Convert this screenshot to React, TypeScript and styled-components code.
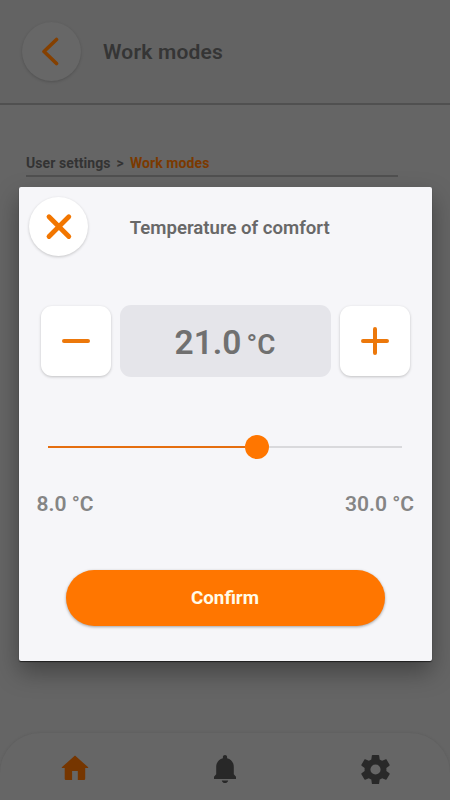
import React from "react";
import styled, { createGlobalStyle } from "styled-components";

const GlobalStyle = createGlobalStyle`
  * { box-sizing: border-box; }
  body { margin: 0; background: #666; font-family: Roboto, "Liberation Sans", sans-serif; }
  button { border: 0; padding: 0; font: inherit; }
`;

const Screen = styled.div`
  position: relative;
  display: flex;
  flex-direction: column;
  width: 450px;
  height: 800px;
  overflow: hidden;
  background: #656565;
`;

const Header = styled.header`
  display: flex;
  align-items: flex-start;
  height: 105px;
  padding: 22px 22px 0;
  border-bottom: 2px solid #505050;
  background: #636363;
`;

const RoundButton = styled.button<{ $dimmed?: boolean }>`
  display: flex;
  align-items: center;
  justify-content: center;
  flex: none;
  width: 59px;
  height: 59px;
  border-radius: 50%;
  background: ${(p) => (p.$dimmed ? "#676767" : "#fff")};
  box-shadow: 0 1px 3px ${(p) => (p.$dimmed ? "rgba(0,0,0,.18)" : "rgba(0,0,0,.2)")};
`;

const PageTitle = styled.h1`
  margin: 17px 0 0 22px;
  color: #353535;
  font-size: 21px;
  line-height: 26px;
  font-weight: 600;
  letter-spacing: 0.22px;
`;

const Content = styled.main`
  flex: 1;
  padding: 48px 52px 0 26px;
`;

const Breadcrumb = styled.nav`
  display: flex;
  gap: 6px;
  height: 24px;
  border-bottom: 2px solid #505050;
  color: #333;
  font-size: 14px;
  line-height: 20px;
  font-weight: 700;
  letter-spacing: 0.08px;
`;

const Current = styled.span`
  color: #7b3900;
`;

const BottomBar = styled.nav`
  display: grid;
  grid-template-columns: repeat(3, 1fr);
  justify-items: center;
  height: 67px;
  padding-top: 21px;
  border-radius: 40px 40px 0 0;
  background: #666;
  box-shadow: 0 0 3px rgba(0, 0, 0, 0.1);
`;

const Overlay = styled.div`
  position: absolute;
  inset: 0;
  padding: 187px 18.500px 0 18.500px;
`;

const Dialog = styled.section`
  display: flex;
  flex-direction: column;
  height: 474px;
  border-radius: 2px;
  background: #f6f6f9;
  box-shadow: 0 1px 1px rgba(0, 0, 0, 0.6), 0 11px 24px rgba(0, 0, 0, 0.34);
`;

const DialogHeader = styled.div`
  display: grid;
  grid-template-columns: 59px 1fr 51px;
  align-items: center;
  height: 59px;
  margin: 10px 9px 0 10.500px;
`;

const DialogTitle = styled.h2`
  margin: 2px 0 0;
  color: #686868;
  text-align: center;
  font-size: 18.600px;
  line-height: 24px;
  font-weight: 600;
  white-space: nowrap;
`;

const Stepper = styled.div`
  display: grid;
  grid-template-columns: 70px 211px 70px;
  align-items: center;
  justify-content: space-between;
  height: 72px;
  margin: 49px 22px 0;
`;

const StepButton = styled.button`
  display: flex;
  align-items: center;
  justify-content: center;
  height: 70px;
  border-radius: 11px;
  background: #fff;
  box-shadow: 0 1px 3px rgba(0, 0, 0, 0.22);
`;

const Reading = styled.output`
  display: flex;
  align-items: baseline;
  justify-content: center;
  gap: 5px;
  height: 72px;
  border-radius: 11px;
  background: #e5e5ea;
  color: #707070;
  font-size: 33.500px;
  line-height: 75px;
  font-weight: 600;
`;

const Unit = styled.span`
  font-size: 27.800px;
`;

const Slider = styled.div`
  display: flex;
  align-items: center;
  height: 24px;
  margin: 58px 29.500px 0;
`;

const Filled = styled.div`
  width: 197px;
  height: 2px;
  background: #e56e10;
`;

const Thumb = styled.div`
  width: 24px;
  height: 24px;
  border-radius: 50%;
  background: #ff7600;
`;

const Remaining = styled.div`
  flex: 1;
  height: 2px;
  background: #d9d9dc;
`;

const Limits = styled.div`
  display: flex;
  justify-content: space-between;
  margin: 32px 17.500px 0 18px;
  color: #858585;
  font-size: 21px;
  line-height: 26px;
  font-weight: 600;
`;

const Confirm = styled.button`
  width: 319px;
  height: 56px;
  margin: 53px auto 0;
  padding-top: 1px;
  border-radius: 28px;
  background: #ff7600;
  box-shadow: 0 1px 3px rgba(0, 0, 0, 0.35);
  color: #fffbe8;
  font-size: 18.800px;
  line-height: 55px;
  font-weight: 700;
`;

const BackIcon = () => (
  <svg width="30" height="30" viewBox="0 0 30 30" fill="none" stroke="#854000" strokeWidth="3.6" strokeLinecap="round" strokeLinejoin="round">
    <path d="M19.500 2.500 7 14.500l12.500 12" />
  </svg>
);

const CloseIcon = () => (
  <svg width="30" height="30" viewBox="0 0 30 30" fill="none" stroke="#f27600" strokeWidth="4.8" strokeLinecap="round">
    <path d="m5 4.700 19.800 19.800M24.800 4.700 5 24.500" />
  </svg>
);

const StepIcon = ({ plus }: { plus?: boolean }) => (
  <svg width="30" height="30" viewBox="0 0 30 30" fill="none" stroke="#ec780b" strokeWidth="4" strokeLinecap="round">
    <path d={plus ? "M3 15h24M15 3v24" : "M3 15h24"} />
  </svg>
);

const HomeIcon = () => (
  <svg width="28" height="28" viewBox="0 0 28 28" fill="#763600">
    <path d="M14 .5.8 12.300v.8h2.900v10.700q0 1.200 1.200 1.200h6.200v-9h5.700v9H23q1.200 0 1.200-1.200V13.100h3v-.8Z" />
  </svg>
);

const BellIcon = () => (
  <svg width="24" height="30" viewBox="0 0 24 30" fill="#282828">
    <path d="M12 1c-1.200 0-2.100.9-2.100 2.100v1.100C5.900 5.300 3.200 8.400 3.200 13v7.300L1 22.800V25h22v-2.200l-2.200-2.500V13c0-4.600-2.700-7.700-6.700-8.800V3.100C14.100 1.900 13.200 1 12 1ZM8.800 26.500h6.400c-.2 1.500-1.500 2.600-3.200 2.600s-3-1.100-3.200-2.600Z" />
  </svg>
);

const GearIcon = () => (
  <svg width="35" height="35" viewBox="0 0 24 24" fill="#292929">
    <path d="M19.43 12.980c.04-.32.07-.64.07-.98s-.03-.66-.07-.98l2.110-1.650c.19-.15.24-.42.12-.64l-2-3.460c-.12-.22-.39-.3-.61-.22l-2.490 1c-.52-.4-1.080-.73-1.690-.98l-.38-2.650A.49.49 0 0 0 14 2h-4c-.25 0-.46.18-.49.42l-.38 2.650c-.61.25-1.170.59-1.690.98l-2.490-1c-.23-.09-.49 0-.61.22l-2 3.460c-.13.22-.07.49.12.64l2.110 1.650c-.04.32-.07.65-.07.98s.03.66.07.98l-2.110 1.650c-.19.15-.24.42-.12.64l2 3.460c.12.22.39.3.61.22l2.490-1c.52.4 1.080.73 1.690.98l.38 2.650c.03.24.24.42.49.42h4c.25 0 .46-.18.49-.42l.38-2.650c.61-.25 1.170-.59 1.690-.98l2.490 1c.23.09.49 0 .61-.22l2-3.460c.12-.22.07-.49-.12-.64l-2.110-1.650ZM12 15.500A3.500 3.500 0 1 1 12 8.500a3.500 3.500 0 0 1 0 7Z" />
  </svg>
);

const NavItem = styled.div`
  display: flex;
  align-items: center;
  justify-content: center;
  width: 40px;
  height: 30px;
`;

export default function App() {
  return (
    <>
      <GlobalStyle />
      <Screen>
        <Header>
          <RoundButton $dimmed aria-label="Back"><BackIcon /></RoundButton>
          <PageTitle>Work modes</PageTitle>
        </Header>
        <Content>
          <Breadcrumb>
            <span>User settings</span>
            <span>&gt;</span>
            <Current>Work modes</Current>
          </Breadcrumb>
        </Content>
        <BottomBar>
          <NavItem><HomeIcon /></NavItem>
          <NavItem><BellIcon /></NavItem>
          <NavItem><GearIcon /></NavItem>
        </BottomBar>
        <Overlay>
          <Dialog role="dialog" aria-label="Temperature of comfort">
            <DialogHeader>
              <RoundButton aria-label="Close"><CloseIcon /></RoundButton>
              <DialogTitle>Temperature of comfort</DialogTitle>
            </DialogHeader>
            <Stepper>
              <StepButton aria-label="Decrease"><StepIcon /></StepButton>
              <Reading>21.0<Unit>°C</Unit></Reading>
              <StepButton aria-label="Increase"><StepIcon plus /></StepButton>
            </Stepper>
            <Slider>
              <Filled />
              <Thumb />
              <Remaining />
            </Slider>
            <Limits>
              <span>8.0 °C</span>
              <span>30.0 °C</span>
            </Limits>
            <Confirm>Confirm</Confirm>
          </Dialog>
        </Overlay>
      </Screen>
    </>
  );
}
